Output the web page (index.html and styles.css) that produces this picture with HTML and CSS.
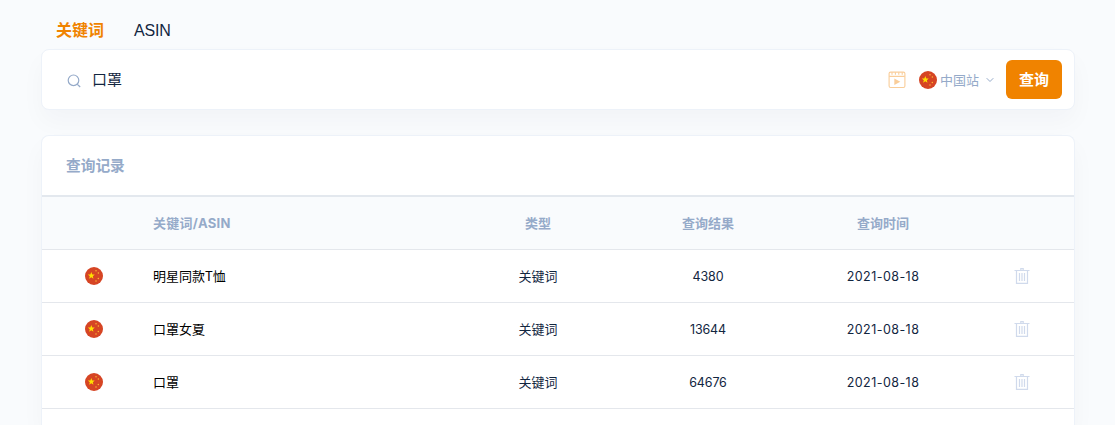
FILE: index.html
```html
<!DOCTYPE html>
<html lang="zh-CN">
<head>
<meta charset="utf-8">
<title>查询记录</title>
<link rel="stylesheet" href="styles.css">
</head>
<body>
<svg class="defs" aria-hidden="true">
  <symbol id="flag" viewBox="0 0 18 18">
    <circle cx="9" cy="9" r="9" fill="#d64524"/>
    <path fill="#ffe000" d="M6.3 5l.95 2.4 2.5.15-1.95 1.6.65 2.5-2.15-1.4-2.15 1.4.65-2.5L2.85 7.55l2.5-.15z"/>
    <g fill="#fcb732"><circle cx="11" cy="3.7" r=".75"/><circle cx="13.4" cy="6" r=".75"/><circle cx="13.3" cy="11.4" r=".75"/><circle cx="11" cy="14" r=".75"/></g>
  </symbol>
  <symbol id="trash" viewBox="0 0 16 18">
    <path fill="none" stroke="#d0daec" stroke-width="1.2" d="M.5 3.5h15M6.8 3.2V1.6h2.4v1.6M2.5 3.5v12.9h11V3.5M5.5 6v8M8 6v8M10.5 6v8"/>
  </symbol>
</svg>
<main class="page">
  <nav class="tabs"><a class="tab active">关键词</a><a class="tab">ASIN</a></nav>
  <section class="card search">
    <svg class="search-icon" viewBox="0 0 14 14"><path d="M11.8 6.3a5.3 5.3 0 1 1-10.6 0a5.3 5.3 0 0 1 10.6 0zM10.3 10.2l2.9 2.8"/></svg>
    <span class="query">口罩</span>
    <svg class="video" viewBox="0 0 18 18"><rect x="1.1" y="1.1" width="15.8" height="15.4" rx="1.5"/><path d="M1.2 5.4h15.6M4 1.3v2.5M7.4 1.3v2.5M10.8 1.3v2.5M14.2 1.3v2.5"/><path class="play" d="M6.3 7.6l6 3.2-6 3.2z"/></svg>
    <svg class="flag"><use href="#flag"/></svg>
    <span class="site">中国站</span>
    <svg class="chevron" viewBox="0 0 8 6"><path d="M.7 1.2L4 4.5l3.3-3.3"/></svg>
    <button class="submit">查询</button>
  </section>
  <section class="card history">
    <h2 class="title">查询记录</h2>
    <table class="records">
      <colgroup><col class="c-flag"><col><col class="c-type"><col class="c-result"><col class="c-time"><col class="c-act"></colgroup>
      <thead><tr><th></th><th class="key">关键词/ASIN</th><th>类型</th><th>查询结果</th><th>查询时间</th><th></th></tr></thead>
      <tbody>
        <tr><td><svg class="flag"><use href="#flag"/></svg></td><td class="key">明星同款T恤</td><td>关键词</td><td class="num">4380</td><td class="num date">2021-08-18</td><td><svg class="trash"><use href="#trash"/></svg></td></tr>
        <tr><td><svg class="flag"><use href="#flag"/></svg></td><td class="key">口罩女夏</td><td>关键词</td><td class="num">13644</td><td class="num date">2021-08-18</td><td><svg class="trash"><use href="#trash"/></svg></td></tr>
        <tr><td><svg class="flag"><use href="#flag"/></svg></td><td class="key">口罩</td><td>关键词</td><td class="num">64676</td><td class="num date">2021-08-18</td><td><svg class="trash"><use href="#trash"/></svg></td></tr>
      </tbody>
    </table>
  </section>
</main>
</body>
</html>
```
FILE: styles.css
```css
* { box-sizing: border-box; }
body {
  margin: 0;
  background: #f9fbfd;
  color: #12263f;
  font-family: "Inter", "Noto Sans CJK SC", sans-serif;
}
.defs { display: none; }
.page { height: 425px; padding: 0 40px 0 41px; }
.tabs {
  display: flex;
  gap: 30px;
  height: 49px;
  padding: 19px 0 0 15px;
  font-size: 16px;
  line-height: 24px;
}
.tab { font-family: "Liberation Sans", "Noto Sans CJK SC", sans-serif; letter-spacing: -.2px; }
.tab.active { color: #f08300; font-weight: 700; letter-spacing: 0; }
.card {
  background: #fff;
  border: 1px solid #edf2f9;
  border-radius: 8px;
  box-shadow: 0 12px 24px rgba(18, 38, 63, .03);
}
.search {
  display: flex;
  align-items: center;
  height: 61px;
  margin-bottom: 25px;
  padding: 0 12px 0 25px;
}
.search-icon {
  width: 14px;
  height: 14px;
  margin: 2px 11px 0 0;
  fill: none;
  stroke: #95aac9;
  stroke-width: 1.2;
}
.query { flex: 1; font-size: 15px; line-height: 24px; }
.video {
  width: 18px;
  height: 18px;
  margin-right: 13px;
  fill: none;
  stroke: #f9cd99;
  stroke-width: 1.1;
}
.video .play { fill: #f9cd99; stroke: none; }
.flag { display: block; width: 18px; height: 18px; }
.site { margin-left: 3px; color: #95aac9; font-size: 13px; }
.chevron {
  width: 8px;
  height: 6px;
  margin: 1px 12px 0 7px;
  fill: none;
  stroke: #95aac9;
}
.submit {
  width: 56px;
  height: 39px;
  padding: 0 0 2px;
  border: 0;
  border-radius: 6px;
  background: #f08300;
  color: #fff;
  font: 700 15px/37px "Noto Sans CJK SC", sans-serif;
}
.history {
  height: 290px;
  border-bottom: 0;
  border-radius: 8px 8px 0 0;
}
.title {
  height: 60px;
  margin: 0;
  padding: 1px 0 0 24px;
  border-bottom: 1px solid #e3e8ee;
  color: #95aac9;
  font-size: 14.7px;
  line-height: 59px;
}
.records { width: 100%; table-layout: fixed; border-collapse: separate; border-spacing: 0; }
.c-flag { width: 104px; }
.c-type { width: 164px; }
.c-result { width: 176px; }
.c-time { width: 174px; }
.c-act { width: 104px; }
.records th, .records td {
  height: 53px;
  padding: 0;
  border-bottom: 1px solid #e4e7ec;
  text-align: center;
  font-size: 13px;
  line-height: 20px;
}
.records th {
  height: 54px;
  border-top: 1px solid #e3e8ee;
  background: #f9fbfd;
  color: #95aac9;
}
.records .key { padding-left: 7px; text-align: left; }
.records th.key { letter-spacing: .25px; }
.records td.key { color: #000; font-family: "Noto Sans CJK SC", sans-serif; }
.records .num { padding-top: 2px; font-size: 12.5px; letter-spacing: -.15px; }
.records .date { letter-spacing: .45px; }
.records .flag { margin: 0 auto; }
.trash { display: block; width: 16px; height: 18px; margin: 0 auto; }
```
